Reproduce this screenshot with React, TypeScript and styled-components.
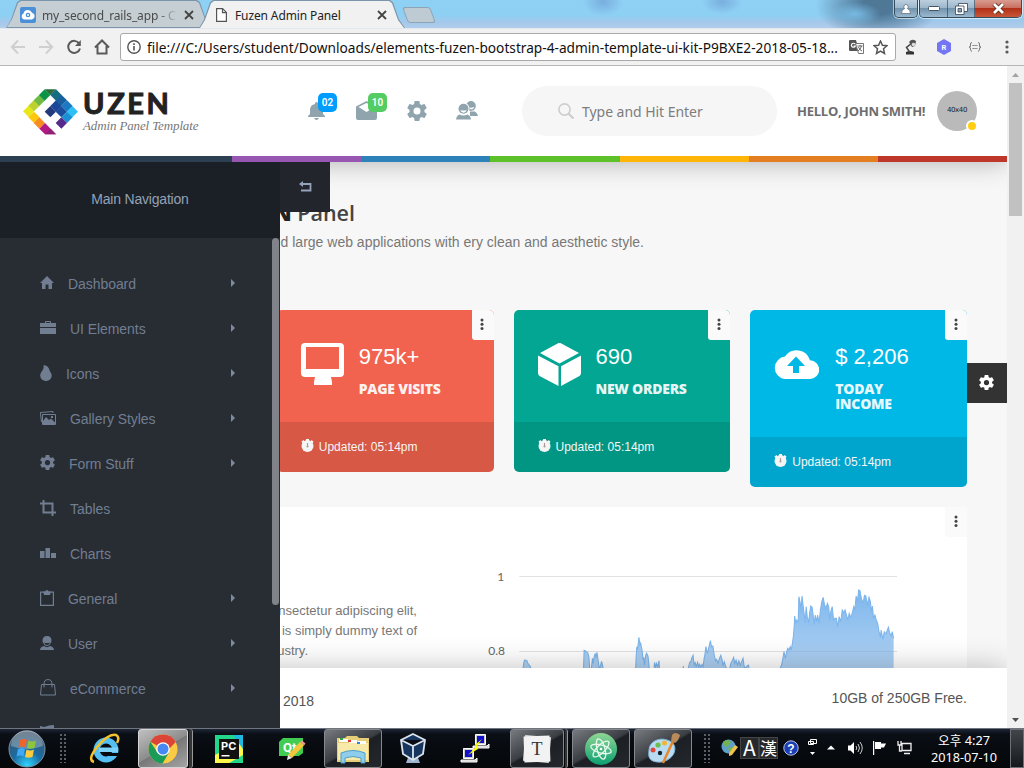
import React from "react";
import styled, { createGlobalStyle } from "styled-components";

const Global = createGlobalStyle`
  *, *::before, *::after { box-sizing: border-box; }
  html, body { margin: 0; padding: 0; overflow: hidden; }
  body { font-family: "Liberation Sans", Arial, sans-serif; font-size: 14px; color: #777; }
  svg { display: block; flex: none; }
`;

const ui = `"Noto Sans", "Noto Sans CJK KR", sans-serif`;

const Desktop = styled.div`
  width: 1024px; height: 768px; display: flex; flex-direction: column; overflow: hidden;
`;

/* ---------- browser window ---------- */
const TitleBar = styled.div`
  height: 28px; flex: none; display: flex; align-items: flex-start; justify-content: space-between;
  background:
    radial-gradient(ellipse 26px 12px at 855px 14px, #77b9e2 0, transparent 100%),
    radial-gradient(ellipse 62px 34px at 878px 6px, #4f7796 0 25%, transparent 100%),
    radial-gradient(ellipse 20px 14px at 603px 2px, #78aedd, transparent),
    radial-gradient(ellipse 20px 12px at 722px 2px, #78aedd, transparent),
    linear-gradient(#8fd0f5 0, #8ecff4 55%, #a5c8ea 80%, #b2cdec 100%);
`;
const Tabs = styled.div`display: flex; padding-left: 6px; height: 28px;`;
const Tab = styled.div<{ $active?: boolean }>`
  position: relative; width: 206px; height: 28px; margin-right: -13px;
  display: flex; align-items: center; padding: 2px 17px 0 ${p => (p.$active ? 17 : 14)}px;
  z-index: ${p => (p.$active ? 2 : 1)};
  font: 12px ${ui}; color: ${p => (p.$active ? "#222" : "#4b4b4b")};
  &::before, &::after {
    content: ""; position: absolute; inset: 0; z-index: -2; background: #7d95aa;
    clip-path: polygon(0 100%, 5px 70%, 11px 8%, 14px 0, 191px 0, 194px 8%, 200px 70%, 206px 100%);
  }
  &::after { inset: 1px 1px ${p => (p.$active ? 0 : 1)}px; z-index: -1; background: ${p => (p.$active ? "#f1f1f1" : "#c5ced3")};
    clip-path: polygon(0 100%, 5px 70%, 11px 8%, 14px 0, 189px 0, 192px 8%, 198px 70%, 204px 100%); }
`;
const TabTitle = styled.span<{ $gap: number; $fade?: boolean }>`
  width: 136px; margin: 0 6px 0 ${p => p.$gap}px; white-space: nowrap; overflow: hidden; letter-spacing: -.12px;
  mask-image: ${p => (p.$fade ? "linear-gradient(90deg,#000 85%,transparent)" : "none")};
`;
const NewTab = styled.div`
  width: 28px; height: 16px; margin: 7px 0 0 13px; border: 1px solid #8da4b5; border-radius: 3px;
  background: #bfcbd2; transform: skewX(20deg);
`;
const WinButtons = styled.div`display: flex; gap: 1px; margin-right: 2px;`;
const WinGroup = styled.div`
  display: flex; height: 18px; border: 1px solid #354b5e; border-top: 0; border-radius: 0 0 5px 5px; overflow: hidden;
  box-shadow: 0 0 0 1px rgba(255,255,255,.55);
`;
const WinBtn = styled.div<{ $w: number; $close?: boolean }>`
  width: ${p => p.$w}px; display: flex; align-items: center; justify-content: center;
  border-right: ${p => (p.$close ? 0 : "1px solid rgba(40,60,80,.6)")};
  &:last-child { border-right: 0; }
  background: ${p => (p.$close ? "linear-gradient(#d99c90 0,#c9705f 45%,#b23018 50%,#c8573a 100%)" : "linear-gradient(#bcd0df 0,#9db7cb 45%,#7394ae 50%,#9bb9cf 100%)")};
`;
const Toolbar = styled.div`
  height: 38px; flex: none; background: #f1f1f1; border-top: 1px solid #e3e8ee; border-bottom: 1px solid #b6b6b6;
  display: flex; align-items: center; padding: 0 9px 0 10px;
`;
const NavButtons = styled.div`display: flex; gap: 12px; width: 110px;`;
const UrlBox = styled.div`
  width: 776px; height: 28px; background: #fff; border: 1px solid #a9a9a9; border-radius: 3px;
  display: flex; align-items: center; padding-left: 6px;
`;
const Url = styled.span`
  flex: none; width: 708px; padding-left: 6px; font: 13.68px ${ui}; color: #111; white-space: nowrap; overflow: hidden;
`;
const Extensions = styled.div`flex: 1; display: flex; align-items: center; justify-content: space-between; padding-left: 8px;`;

/* ---------- page ---------- */
const Viewport = styled.div`height: 662px; display: flex; flex: none;`;
const Page = styled.div`
  position: relative; width: 1007px; background: #f7f7f7; overflow: hidden; display: flex; flex-direction: column;
`;
const ScrollTrack = styled.div`
  width: 17px; background: #f1f1f1; display: flex; flex-direction: column; align-items: center; padding: 7px 0 6px;
`;
const ScrollThumb = styled.div`width: 13px; height: 133px; margin-top: 6px; margin-bottom: auto; background: #c1c1c1;`;

const Header = styled.header`
  position: relative; z-index: 3; flex: none; background: #fff; box-shadow: 0 0 25px rgba(0,0,0,.3);
`;
const HeaderRow = styled.div`height: 90px; display: flex; align-items: center; padding-left: 23px;`;
const Brand = styled.div`display: flex; align-items: center; width: 284px; gap: 4px; padding-top: 1px;`;
const BrandText = styled.div`display: flex; flex-direction: column; padding-bottom: 1px;`;
const BrandName = styled.div`font: 700 29px/30px Lato, sans-serif; -webkit-text-stroke: 1px #222; color: #222; letter-spacing: 2.6px;`;
const BrandTag = styled.div`font: italic 13px/16px "Liberation Serif", serif; color: #777; white-space: nowrap; letter-spacing: -.13px;`;
const HeaderIcons = styled.div`display: flex; width: 215px; gap: 28px; color: #90a4ae; align-items: center;`;
const IconSlot = styled.div<{ $w: number }>`position: relative; width: ${p => p.$w}px; padding-bottom: 1px;`;
const Badge = styled.span<{ $c: string; $x?: number }>`
  position: absolute; left: ${p => p.$x || 11}px; top: -8px; width: 19px; height: 19px; border-radius: 5px; background: ${p => p.$c};
  color: #fff; font: 600 10px/19px Roboto, sans-serif; text-align: center;
`;
const Search = styled.div`
  width: 255px; height: 50px; border-radius: 25px; background: #f6f6f6; display: flex; align-items: center;
  padding-left: 36px; gap: 8px; font: 14px ${ui}; color: #7d7d7d; white-space: nowrap; letter-spacing: -.04px;
`;
const Hello = styled.div`
  margin-left: 20px; width: 140px; font: 700 13px "Open Sans", sans-serif; color: #6d6d6d; white-space: nowrap; letter-spacing: -.25px;
`;
const Avatar = styled.div`
  position: relative; width: 40px; height: 40px; border-radius: 50%; background: #bababa; color: #222;
  font: 7px/39px "DejaVu Sans", sans-serif; text-align: center; letter-spacing: -.4px;
  &::after { content: ""; position: absolute; right: -1px; bottom: -1px; width: 12px; height: 12px; border-radius: 50%;
    border: 2px solid #fff; background: #ffcd12; }
`;
const Stripe = styled.div`display: grid; grid-template-columns: 232px repeat(6, 1fr); height: 6px;`;
const StripePart = styled.i<{ $c: string }>`background: ${p => p.$c};`;

const Sidebar = styled.aside`
  position: absolute; z-index: 4; left: 0; top: 96px; width: 280px; height: 566px; background: #282c33;
  display: flex; flex-direction: column;
`;
const SideHead = styled.div`
  height: 76px; flex: none; background: #1b1f26; color: #94a2b5; text-align: center; line-height: 75px; font-size: 14px; letter-spacing: -.2px;
`;
const SideBody = styled.div`flex: 1; display: flex; overflow: hidden;`;
const SideList = styled.div`width: 272px; padding-top: 24px;`;
const SideBar = styled.div`width: 7px; height: 367px; border-radius: 4px; background: #80848a;`;
const NavItem = styled.div`
  height: 45px; display: flex; align-items: center; padding: 0 0 2px 40px; color: #717e92; font-size: 14px; letter-spacing: -.06px;
`;
const NavIcon = styled.span<{ $w: number }>`width: ${p => p.$w}px; margin-right: 14px; padding-bottom: 2px;`;
const NavLabel = styled.span`flex: 1;`;
const Caret = styled.i`
  border: 4px solid transparent; border-left-color: #7e8b9f; border-right: 0; margin: 0 37px 2px 0;
`;
const Collapse = styled.div`
  position: absolute; z-index: 4; left: 280px; top: 96px; width: 50px; height: 50px; background: #22252c;
  display: flex; align-items: center; justify-content: center; color: #94a3ba; padding-bottom: 2px;
`;
const Customizer = styled.div`
  position: absolute; z-index: 4; right: 0; top: 297px; width: 40px; height: 40px; background: #333; color: #fff;
  display: flex; align-items: center; justify-content: center; padding: 0 2px 2px 0;
`;

const Main = styled.main`flex: 1; padding: 36px 40px 0;`;
const Heading = styled.h1`
  margin: 0; width: 315px; font: 600 21.500px/30px "Open Sans", sans-serif; color: #444; text-align: right; white-space: nowrap;
  b { font-weight: 800; color: #222; }
`;
const Sub = styled.p`margin: 5px 0 0; width: 604px; text-align: right; line-height: 18px; white-space: nowrap;`;
const Cards = styled.div`
  margin-top: 59px; display: grid; grid-template-columns: repeat(4, 1fr); gap: 20px; align-items: start;
`;
const Card = styled.section<{ $c: string; $col: number }>`
  position: relative; grid-column: ${p => p.$col}; grid-row: 1; background: ${p => p.$c}; border-radius: 5px; overflow: hidden; color: #fff;
`;
const CardBody = styled.div`display: flex; gap: 14px; padding: 34px 36px 26px 24px;`;
const CardIcon = styled.span<{ $wide?: boolean }>`margin: ${p => (p.$wide ? "5px 2px 0 -1px" : "-1px 0 0")};`;
const Value = styled.div`font-size: 22px; line-height: 26px;`;
const Label = styled.div`
  margin-top: 11px; font: 800 14px/15px "Open Sans", sans-serif; color: rgba(255,255,255,.92); letter-spacing: -.25px;
`;
const CardFoot = styled.div`
  height: 50px; background: rgba(0,0,0,.1); padding-left: 24px; display: flex; align-items: center; gap: 5px;
  font-size: 12px; color: #f5f5f5;
  svg { margin-bottom: 4px; }
`;
const Menu = styled.span`
  position: absolute; right: 0; top: 0; width: 22px; height: 30px; background: #fafafa; border-radius: 0 4px 0 3px; color: #444;
  display: flex; align-items: center; justify-content: center; padding: 0 1px 1px 0;
`;
const Panel = styled.section`
  position: relative; margin-top: 20px; height: 300px; background: #fff; border-radius: 4px; display: flex;
`;
const Copy = styled.div`width: 440px; padding-top: 94px; font-size: 13px; line-height: 20px;`;
const CopyLine = styled.div<{ $end: number }>`width: ${p => p.$end}px; text-align: right; white-space: nowrap;`;
const Footer = styled.footer`
  position: absolute; z-index: 3; bottom: 0; left: 0; right: 0; height: 60px; background: #fff; box-shadow: 0 0 30px rgba(0,0,0,.25);
  display: flex; justify-content: space-between; padding: 0 40px 0 283px; color: #555; line-height: 60px;
`;
const Year = styled.span`padding-top: 3px;`;

/* ---------- taskbar ---------- */
const Taskbar = styled.div`
  height: 40px; flex: none; display: flex; align-items: stretch; border-top: 1px solid #70757d;
  background: linear-gradient(#1d2738 0, #0b0f16 5px, #070b10 50%, #050709 100%);
`;
const Slot = styled.div<{ $w: number }>`width: ${p => p.$w}px; display: flex; align-items: center; justify-content: center;`;
const TaskBtn = styled(Slot)<{ $hot?: boolean; $shift?: boolean }>`
  margin: 0 4px 0 ${p => (p.$shift ? 3 : 0)}px; border: 1px solid ${p => (p.$hot ? "#d5d5d5" : "#85888c")}; border-radius: 3px;
  background: ${p => (p.$hot ? "linear-gradient(150deg,#c0c0c0,#8c8c8c 50%,#777 51%,#a4a4a4)" : "linear-gradient(150deg,#777a7e,#3a3e43 48%,#1c2024 52%,#24282c)")};
`;
const Stack = styled.i`width: 3px; margin: 0 1px 0 -3px; border-right: 1px solid #999; border-radius: 0 3px 3px 0; background: #333;`;
const Grip = styled.div`
  width: 8px; height: 30px; margin: 4px 5px 0;
  background: radial-gradient(circle, #5b6068 0 .8px, transparent 1px) 0 0 / 4px 4px;
`;
const Tray = styled.div`display: flex; align-items: center; color: #fff; width: 202px; padding-left: 5px; padding-bottom: 2px;`;
const TrayItem = styled.span<{ $gap: number }>`margin-left: ${p => p.$gap}px;`;
const Ime = styled.span<{ $size: number }>`
  width: 19px; height: 22px; border: 1px solid #444; background: #25282c; font: ${p => p.$size}px/19px "Noto Sans CJK KR", sans-serif; color: #fff;
  display: flex; justify-content: center;
`;
const Clock = styled.div`
  width: 92px; display: flex; flex-direction: column; align-items: center; justify-content: center; color: #fff; font: 12.700px/17px ${ui};
  padding-top: 1px;
`;
const ShowDesktop = styled.div`width: 14px; margin-left: auto; border: 1px solid #6d7176; background: linear-gradient(#42464b,#15181c);`;

/* ---------- icons ---------- */
const Gear = ({ s }: { s: number }) => (
  <svg width={s} height={s} viewBox="2 2 20 20">
    <path fill="currentColor" fillRule="evenodd" d="M19.430 12.980c.04-.32.07-.64.07-.98s-.03-.66-.07-.98l2.110-1.650c.19-.15.24-.42.12-.64l-2-3.460c-.12-.22-.39-.3-.61-.22l-2.490 1c-.52-.4-1.080-.73-1.690-.98l-.38-2.650C14.460 2.180 14.250 2 14 2h-4c-.25 0-.46.18-.49.42l-.38 2.650c-.61.25-1.170.59-1.690.98l-2.490-1c-.23-.09-.49 0-.61.22l-2 3.460c-.13.22-.07.49.12.64l2.110 1.650c-.04.32-.07.65-.07.98s.03.66.07.98l-2.110 1.650c-.19.15-.24.42-.12.64l2 3.460c.12.22.39.3.61.22l2.490-1c.52.4 1.080.73 1.690.98l.38 2.650c.03.24.24.42.49.42h4c.25 0 .46-.18.49-.42l.38-2.650c.61-.25 1.170-.59 1.690-.98l2.490 1c.23.09.49 0 .61-.22l2-3.460c.12-.22.07-.49-.12-.64zM12 8.500a3.500 3.500 0 1 0 0 7 3.500 3.500 0 0 0 0-7z" />
  </svg>
);
const Dots = () => (
  <svg width="4" height="13" viewBox="0 0 4 13" fill="currentColor">
    <circle cx="2" cy="2" r="1.500" /><circle cx="2" cy="6.300" r="1.500" /><circle cx="2" cy="10.600" r="1.500" />
  </svg>
);
const Watch = () => (
  <svg width="13" height="13" viewBox="0 0 13 13">
    <circle cx="6.500" cy="7" r="6" fill="#f5f5f5" /><path fill="#f5f5f5" d="M5 0h3v2H5zM.5 2.500l2-1.500 1 1.500-2 2zM12.500 2.500l-2-1.500-1 1.500 2 2z" />
    <path stroke="#a99" strokeWidth="1.100" d="M6.500 4v4" /><circle cx="6.500" cy="7.500" r="1" fill="#a99" />
  </svg>
);
const cell = (cx: number, cy: number) => `M${cx - 17} ${cy}l17 -17 17 17 -17 17z`;
const tiles: [number, number, string][] = [
  [86, 136, "#e9e817"], [102, 119, "#bdd22f"], [118, 103, "#70bb44"], [134, 87, "#0d9347"],
  [168, 87, "#156d84"], [184, 103, "#175f9d"], [201, 120, "#1b78c2"], [217, 137, "#2cc0f4"],
  [102, 154, "#fdc70e"], [118, 171, "#f78d22"], [168, 120, "#1b4899"], [151, 137, "#253a7c"],
  [184, 137, "#1a4d9e"], [201, 154, "#1a8fd3"], [184, 171, "#562b8c"],
];
const Logo = () => (
  <svg width="56" height="46" viewBox="69 69 168 138">
    <path fill="#2d6b3c" d="M134 70h34l-17 18z" />
    {tiles.map(([x, y, c]) => <path key={x + "-" + y} d={cell(x, y)} fill={c} />)}
    <path fill="#b41a83" d="M118 188l17-17 33 34h-33z" /><path fill="#8d2377" d="M135 205l17-17 16 17z" />
  </svg>
);

const navIcons: Record<string, React.ReactNode> = {
  home: <svg width="14" height="13" viewBox="0 0 14 13"><path fill="currentColor" d="M7 0l7 7h-2v6H8.500V8.500h-3V13H2V7H0z" /></svg>,
  case: <svg width="16" height="13" viewBox="0 0 16 13"><path fill="currentColor" d="M5 2V.8Q5 0 6 0h4q1 0 1 .8V2h4.500q.5 0 .5.500V6H0V2.500Q0 2 .5 2zm1.200 0h3.600V1H6.200zM0 7h16v5.500q0 .5-.5.500H.5q-.5 0-.5-.500z" /></svg>,
  drop: <svg width="12" height="16" viewBox="0 0 12 16"><path fill="currentColor" d="M3.500 0C9 1 9 4 10 6.500c1 1.500 1.700 2.500 1.700 4.200A5.500 5.500 0 0 1 6 16 5.600 5.600 0 0 1 .2 10.500C.2 7 4.500 5 3.500 0z" /></svg>,
  images: <svg width="16" height="14" viewBox="0 0 16 14" fill="none" stroke="currentColor"><path d="M2.500 3.500h13v10h-13zM1.500 11L.5 3V1.500L13 .5v1.500" /><path fill="currentColor" stroke="none" d="M3 13v-3l3-4 3 3 2-1.500 4 4V13zM11 5h2v2h-2z" /></svg>,
  gear: <Gear s={15} />,
  crop: <svg width="16" height="16" viewBox="0 0 16 16" fill="none" stroke="currentColor" strokeWidth="2"><path d="M3.500 0v12.500H16M0 3.500h12.500V16" /></svg>,
  bars: <svg width="16" height="10" viewBox="0 0 16 10"><path fill="currentColor" d="M0 3h4.500v7H0zM5.500 0H10v10H5.500zM11 5h5v5h-5z" /></svg>,
  clip: <svg width="14" height="16" viewBox="0 0 14 16"><path fill="none" stroke="currentColor" strokeWidth="1.200" d="M.6 2.100h12.800v13.300H.6z" /><path fill="currentColor" d="M3 1.500h2.500a1.500 1.500 0 0 1 3 0H11L10 5H4z" /></svg>,
  user: <svg width="14" height="14" viewBox="0 0 14 14"><path fill="currentColor" d="M7 0c3 0 4.500 2 4.500 4.500S9 10 7 10 2.500 7 2.500 4.500 4 0 7 0zM0 14c0-2.500 2-3.500 4-4 2 1.500 4 1.500 6 0 2 .5 4 1.500 4 4z" /><path d="M4 6.500q3 1.200 6 0-1 2.500-3 2.500t-3-2.500z" fill="#282c33" /></svg>,
  bag: <svg width="16" height="17" viewBox="0 0 16 17" fill="none" stroke="currentColor"><path d="M1.500 5.500h13l1 10.500H.5zM4 8.500V5Q4 .6 8 .6T12 5v3.500" /></svg>,
  map: <svg width="14" height="16" viewBox="0 0 14 16"><path fill="currentColor" d="M0 1l4 1 2-.5L9 .5 14 0v16H0z" /></svg>,
};
const nav: [string, string, number, boolean][] = [
  ["Dashboard", "home", 14, true], ["UI Elements", "case", 16, true], ["Icons", "drop", 12, true],
  ["Gallery Styles", "images", 16, true], ["Form Stuff", "gear", 15, true], ["Tables", "crop", 16, false],
  ["Charts", "bars", 16, false], ["General", "clip", 14, true], ["User", "user", 14, true], ["eCommerce", "bag", 16, true], ["", "map", 14, false],
];

const CloseX = () => (
  <svg width="10" height="10" viewBox="0 0 10 10"><path stroke="#444" strokeWidth="1.800" d="M1 1l8 8M9 1l-8 8" /></svg>
);

const series =
  "115,380 122,370 126,340 128,330 135,331 137,338 140,343 144,348 147,356 150,375 298,375 300,301 304,303 308,306 311,310 314,322 316,356 319,375 321,356 324,325 326,340 329,320 332,310 334,325 337,307 341,335 344,356 348,345 350,334 352,340 355,356 358,380 445,380 449,350 450,320 452,290 454,298 458,262 461,285 463,280 467,300 470,330 472,322 474,345 477,318 480,310 484,318 487,345 489,375 500,375 503,337 506,350 509,340 512,352 516,332 518,375 583,375 586,349 589,375 600,356 604,338 608,333 611,322 614,316 617,345 620,338 623,350 627,337 630,350 633,343 636,351 640,343 643,350 646,325 648,315 651,290 655,310 658,298 661,285 664,272 667,290 671,288 675,315 679,333 682,328 686,340 690,325 694,316 698,330 700,347 704,335 708,350 712,356 719,358 723,340 727,332 731,322 734,340 738,330 742,345 746,332 750,346 754,335 758,325 761,348 765,355 769,348 774,345 777,375 862,375 866,352 869,345 873,325 876,305 880,325 884,305 887,295 891,300 894,290 897,300 900,282 903,260 905,235 907,198 910,220 913,210 917,215 919,140 923,160 925,185 928,138 931,165 934,190 937,218 940,170 943,200 947,218 950,190 953,168 957,172 960,195 963,224 966,195 970,215 973,195 977,220 981,180 985,155 989,142 993,165 997,175 1001,160 1005,170 1008,212 1011,185 1015,170 1019,210 1023,205 1027,205 1031,230 1035,200 1040,215 1044,180 1048,188 1052,180 1056,195 1060,210 1064,190 1068,202 1072,192 1077,170 1080,180 1084,138 1088,155 1091,120 1095,122 1099,145 1104,160 1108,136 1112,138 1116,165 1121,142 1125,155 1128,185 1131,168 1134,205 1138,195 1142,210 1146,220 1150,245 1154,262 1156,240 1161,268 1165,245 1170,252 1174,240 1177,232 1181,250 1185,258 1188,245 1192,265";

const Chart = () => (
  <svg width="487" height="161" viewBox="0 -129 1461 483">
    <defs>
      <linearGradient id="area" gradientUnits="userSpaceOnUse" x1="0" y1="110" x2="0" y2="720">
        <stop offset="0" stopColor="#7cb5ec" /><stop offset="1" stopColor="#7cb5ec" stopOpacity="0" />
      </linearGradient>
    </defs>
    <path d="M118 79.500H1251M118 304.500H1251" stroke="#e2e2e2" strokeWidth="3" />
    <g transform="scale(1.041 1)">
      <polygon points={series + " 1192,400 115,400"} fill="url(#area)" />
      <polyline points={series} fill="none" stroke="#7cb5ec" strokeWidth="3" />
    </g>
    <g fontFamily="Lato, sans-serif" fontSize="36" fill="#666" textAnchor="end"><text x="73" y="93">1</text><text x="75" y="316">0.8</text></g>
  </svg>
);

const StatCard = ({ col, color, icon, wide, value, label }: { col: number; color: string; icon: React.ReactNode; wide?: boolean; value: string; label: string }) => (
  <Card $col={col} $c={color}>
    <CardBody><CardIcon $wide={wide}>{icon}</CardIcon><div><Value>{value}</Value><Label>{label}</Label></div></CardBody>
    <CardFoot><Watch /><span>Updated: 05:14pm</span></CardFoot>
    <Menu><Dots /></Menu>
  </Card>
);

const Monitor = () => (
  <svg width="44" height="42" viewBox="0 0 44 42"><path fill="#fff" fillRule="evenodd" d="M4 0h35q4 0 4 4v26q0 4-4 4h-9l1 5v3H13v-3l1-5H4q-4 0-4-4V4q0-4 4-4zm1 4v22h33V4z" /></svg>
);
const Cube = () => (
  <svg width="44" height="43" viewBox="0 0 44 43"><path fill="#fff" d="M21.500-.5L41 10 21.500 20.500 2 10zM0 12.500l20.500 10.800V43L1.500 33Q0 32 0 30zM43 12.500L23 23.300V43l18.500-10q1.500-1 1.500-3z" /></svg>
);
const Cloud = () => (
  <svg width="46" height="30" viewBox="0 0 46 30"><path fill="#fff" fillRule="evenodd" d="M37 11.300A14 14 0 0 0 12 7.600 11.300 11.300 0 0 0 11.300 30H36.700a9.300 9.300 0 0 0 .3-18.700zM26 17v7h-6v-7h-6l9-9.500 9 9.500z" /></svg>
);

export default function App() {
  return (
    <Desktop>
      <Global />
      <TitleBar>
        <Tabs>
          <Tab>
            <svg width="16" height="16" viewBox="0 0 16 16"><rect width="16" height="16" rx="2" fill="#4a90d9" /><path fill="#fff" d="M4 12.500A3.200 3.200 0 0 1 3.500 6.500a4.500 4.500 0 0 1 8.500-.8A3.500 3.500 0 0 1 12 12.500z" /><circle cx="8" cy="8" r="2.300" fill="#4a90d9" /><circle cx="8" cy="8" r="1" fill="#fff" /></svg>
            <TabTitle $gap={6} $fade>my_second_rails_app - C</TabTitle>
            <CloseX />
          </Tab>
          <Tab $active>
            <svg width="11" height="14" viewBox="0 0 11 14"><path fill="#fff" stroke="#555" strokeWidth="1.200" d="M.6.6h6l3.800 3.800v9H.6zM6.500.6v4h4" /></svg>
            <TabTitle $gap={8}>Fuzen Admin Panel</TabTitle>
            <CloseX />
          </Tab>
          <NewTab />
        </Tabs>
        <WinButtons>
          <WinGroup><WinBtn $w={22}><svg width="10" height="10" viewBox="0 0 10 10"><path fill="#fff" stroke="#456" strokeWidth=".6" d="M5 .5a2.300 2.300 0 0 1 1.300 4.100Q9.500 5.500 9.500 9.500h-9Q.5 5.500 3.700 4.600A2.300 2.300 0 0 1 5 .5z" /></svg></WinBtn></WinGroup>
          <WinGroup>
            <WinBtn $w={28}><svg width="12" height="5" viewBox="0 0 12 5"><rect x=".5" y=".5" width="11" height="4" rx="1" fill="#fff" stroke="#456" /></svg></WinBtn>
            <WinBtn $w={27}><svg width="13" height="12" viewBox="0 0 13 12"><path fill="#fff" stroke="#345" strokeWidth=".8" d="M3.500.5h9v8h-9z" /><path fill="#fff" stroke="#345" strokeWidth=".8" d="M.5 3h8.500v8.500H.5z" /><path fill="#89a5ba" stroke="#345" strokeWidth=".8" d="M3 5.500h3.500V9H3z" /></svg></WinBtn>
            <WinBtn $w={46} $close><svg width="13" height="11" viewBox="0 0 13 11"><path stroke="#532" strokeWidth="4.500" d="M2 1l9 9M11 1l-9 9" /><path stroke="#fff" strokeWidth="2.800" d="M2 1l9 9M11 1l-9 9" /></svg></WinBtn>
          </WinGroup>
        </WinButtons>
      </TitleBar>
      <Toolbar>
        <NavButtons>
          <svg width="16" height="16" viewBox="0 0 16 16" fill="none" stroke="#cfcfcf" strokeWidth="1.900"><path d="M15 8H2.500M8 1.500L1.800 8 8 14.500" /></svg>
          <svg width="16" height="16" viewBox="0 0 16 16" fill="none" stroke="#cfcfcf" strokeWidth="1.900"><path d="M1 8h12.500M8 1.500L14.200 8 8 14.500" /></svg>
          <svg width="16" height="16" viewBox="0 0 16 16" fill="none" stroke="#5a5a5a" strokeWidth="2"><path d="M13.200 4.500A6 6 0 1 0 14 9.500" /><path d="M14.800 1v6H9z" fill="#5a5a5a" stroke="none" /></svg>
          <svg width="16" height="16" viewBox="0 0 16 16" fill="none" stroke="#5a5a5a" strokeWidth="2"><path d="M1 8.500L8 1.500l7 7M3.500 7v7.500h9V7" /></svg>
        </NavButtons>
        <UrlBox>
          <svg width="14" height="14" viewBox="0 0 14 14"><circle cx="7" cy="7" r="6.200" fill="none" stroke="#555" strokeWidth="1.400" /><path fill="#555" d="M6.200 6h1.600v4.500H6.200zM6.200 3.300h1.600v1.600H6.200z" /></svg>
          <Url>file:///C:/Users/student/Downloads/elements-fuzen-bootstrap-4-admin-template-ui-kit-P9BXE2-2018-05-18...</Url>
          <svg width="15" height="15" viewBox="0 0 15 15"><path fill="#555" d="M1 0h6l3 11H1q-1 0-1-1V1q0-1 1-1z" /><path fill="#fff" stroke="#777" d="M6.500 3.500h8v10h-5z" /><path fill="none" stroke="#fff" strokeWidth="1.200" d="M6 4a2 2 0 1 0 .3 2H4.500" /><path d="M8.500 6h5M11 5v1M9 11q3-2 3.500-5M9.500 7q1 3 3.500 4" fill="none" stroke="#666" /></svg>
          <TrayItem $gap={9}><svg width="15" height="15" viewBox="0 0 15 15"><path fill="none" stroke="#555" strokeWidth="1.500" d="M7.500 1l1.900 4.300 4.600.4-3.500 3.100 1 4.600-4-2.400-4 2.400 1-4.600L1 5.700l4.600-.4z" /></svg></TrayItem>
        </UrlBox>
        <Extensions>
          <svg width="16" height="16" viewBox="0 0 16 16"><path fill="#333" d="M2 13q4-2 8 0v2.500H2z" /><path d="M6 13.500L2.500 8.500 8 4" fill="none" stroke="#444" strokeWidth="1.500" /><path fill="#555" d="M5 3q3-4 7-1l-1 5-3 1z" /><circle cx="9.500" cy="5.500" r="1.800" fill="#ddd" /></svg>
          <svg width="16" height="16" viewBox="0 0 16 16"><path fill="#7375f5" d="M8 0l7 4v8l-7 4-7-4V4z" /><text x="8" y="11" fontSize="7.500" fontWeight="700" fontFamily="Roboto, sans-serif" textAnchor="middle" fill="#fff">R</text></svg>
          <svg width="16" height="12" viewBox="0 0 16 12"><g fill="none" stroke="#777"><path d="M5 1.500Q3 1.500 3.500 4T2 6q1.500 0 1.500 2T5 10.500M11 1.500q2 0 1.500 2.500T14 6q-1.500 0-1.500 2T11 10.500" /><path d="M5.500 4.500h5M5.500 7.500h5" strokeDasharray="1.400 .5" /></g></svg>
          <svg width="16" height="16" viewBox="0 0 16 16" fill="#5a5a5a"><circle cx="8" cy="3" r="1.600" /><circle cx="8" cy="8" r="1.600" /><circle cx="8" cy="13" r="1.600" /></svg>
        </Extensions>
      </Toolbar>

      <Viewport>
        <Page>
          <Header>
            <HeaderRow>
              <Brand>
                <Logo />
                <BrandText><BrandName>UZEN</BrandName><BrandTag>Admin Panel Template</BrandTag></BrandText>
              </Brand>
              <HeaderIcons>
                <IconSlot $w={20}>
                  <svg width="20" height="19" viewBox="0 0 20 19"><path fill="currentColor" d="M1 16v-1l2-2V8.500A6 6 0 0 1 8 3V2q1.500-2 3 0v1a6 6 0 0 1 5 5.500V13l2 2v1zM7 17h5q-1 2-2.500 2T7 17z" /></svg>
                  <Badge $c="#009dff">02</Badge>
                </IconSlot>
                <IconSlot $w={24}>
                  <svg width="23" height="19" viewBox="0 0 23 19"><path fill="currentColor" fillRule="evenodd" d="M1 5.500L11.500 0 22 5.500V17q0 2-2 2H3q-2 0-2-2zM3.500 6l8 5 8-5-8-4z" /></svg>
                  <Badge $c="#53cc63" $x={13}>10</Badge>
                </IconSlot>
                <IconSlot $w={21}><Gear s={20} /></IconSlot>
                <IconSlot $w={22}>
                  <svg width="22" height="19" viewBox="0 0 22 19">
                    <path fill="currentColor" d="M10 0h0M15 0a4.800 4.800 0 0 1 4.800 4.800C19.800 8 17.500 10 15 10s-4.800-2-4.800-5.200A4.800 4.800 0 0 1 15 0zM14 10.500h5q2.500 1.500 3 4.500h-8z" />
                    <path fill="#fff" d="M13 6.500q3 .8 5.500-.8-1 2.800-3.500 2.800z" />
                    <circle cx="7.500" cy="7.800" r="6" fill="#fff" /><circle cx="7.500" cy="7.800" r="5" fill="currentColor" />
                    <path fill="#fff" d="M4.300 9q3.200 1.200 6.400 0-1 2.700-3.200 2.700T4.300 9z" />
                    <path fill="currentColor" d="M0 18.500Q.5 14.500 3.500 13.500q4 2 8 0 3 1 3.500 5z" />
                  </svg>
                </IconSlot>
              </HeaderIcons>
              <Search>
                <svg width="16" height="16" viewBox="0 0 16 16" fill="none" stroke="#cdcdcd" strokeWidth="1.600"><circle cx="6.500" cy="6.500" r="5.600" /><path strokeWidth="2.200" d="M10.500 10.500l5 5" /></svg>
                <span>Type and Hit Enter</span>
              </Search>
              <Hello>HELLO, JOHN SMITH!</Hello>
              <Avatar>40x40</Avatar>
            </HeaderRow>
            <Stripe>
              {["#2d4052", "#9656b2", "#2c82b9", "#5dc12a", "#ffb508", "#e37e22", "#bf372a"].map(c => <StripePart key={c} $c={c} />)}
            </Stripe>
          </Header>

          <Sidebar>
            <SideHead>Main Navigation</SideHead>
            <SideBody>
              <SideList>
                {nav.map(([label, icon, w, sub]) => (
                  <NavItem key={icon}><NavIcon $w={w}>{navIcons[icon]}</NavIcon><NavLabel>{label}</NavLabel>{sub && <Caret />}</NavItem>
                ))}
              </SideList>
              <SideBar />
            </SideBody>
          </Sidebar>
          <Collapse>
            <svg width="13" height="11" viewBox="0 0 13 11" fill="none" stroke="currentColor" strokeWidth="1.800"><path d="M2 3h9.500v6.500H2" /><path fill="currentColor" stroke="none" d="M4 0v6L0 3z" /></svg>
          </Collapse>
          <Customizer><Gear s={15} /></Customizer>

          <Main>
            <Heading><b>FUZEN</b> Panel</Heading>
            <Sub>and large web applications with ery clean and aesthetic style.</Sub>
            <Cards>
              <StatCard col={2} color="#f1634e" icon={<Monitor />} value="975k+" label="PAGE VISITS" />
              <StatCard col={3} color="#02a692" icon={<Cube />} value="690" label="NEW ORDERS" />
              <StatCard col={4} color="#00b8e6" icon={<Cloud />} wide value="$ 2,206" label="TODAY INCOME" />
            </Cards>
            <Panel>
              <Copy>
                <CopyLine $end={377}>consectetur adipiscing elit,</CopyLine>
                <CopyLine $end={377}>is simply dummy text of</CopyLine>
                <CopyLine $end={268}>industry.</CopyLine>
              </Copy>
              <Chart />
              <Menu><Dots /></Menu>
            </Panel>
          </Main>
          <Footer><Year>2018</Year><span>10GB of 250GB Free.</span></Footer>
        </Page>
        <ScrollTrack>
          <svg width="7" height="4" viewBox="0 0 7 4"><path fill="#a3a3a3" d="M0 4l3.500-4L7 4z" /></svg>
          <ScrollThumb />
          <svg width="7" height="4" viewBox="0 0 7 4"><path fill="#505050" d="M0 0l3.500 4L7 0z" /></svg>
        </ScrollTrack>
      </Viewport>

      <Taskbar>
        <Slot $w={54}>
          <svg width="38" height="38" viewBox="0 0 38 38">
            <defs><radialGradient id="orb" cx=".5" cy=".95" r=".9"><stop offset="0" stopColor="#2fd6ff" /><stop offset=".45" stopColor="#1b6ca3" /><stop offset="1" stopColor="#3d5468" /></radialGradient></defs>
            <circle cx="19" cy="19" r="18" fill="url(#orb)" stroke="#7d92a3" /><path fill="#fff" opacity=".28" d="M3 16a16 16 0 0 1 32 0q-16 6-32 0z" />
            <path fill="#f0642c" d="M12 10q4-2 7 0l-1.500 7.500q-3.500-2-7 0z" /><path fill="#8cc63e" d="M20.500 10.500q4 2 7.500 0L26.500 18q-4 1.500-7.500 0z" /><path fill="#3fa9f5" d="M10 19q4-2 7 0l-1.500 7.500q-3.500-2-7 0z" /><path fill="#fccb3e" d="M18.500 19.500q4 2 7.500 0L24.500 27q-4 1.500-7.500 0z" />
          </svg>
        </Slot>
        <Grip />
        <Slot $w={66}>
          <svg width="32" height="32" viewBox="0 0 32 32"><circle cx="17" cy="17" r="9.500" fill="none" stroke="#54bff2" strokeWidth="6" /><path fill="#070b10" d="M20 20h12v3H20z" /><path fill="#7cd2f8" d="M10 14.500h19v4.500H10z" /><path d="M5 29Q-2 27 8 14 20 0 27 2q4 2 1 8" fill="none" stroke="#f5c22e" strokeWidth="2.500" /></svg>
        </Slot>
        <TaskBtn $w={50} $hot>
          <svg width="30" height="30" viewBox="-15 -15 30 30"><circle r="14.500" fill="#fbcb43" /><path fill="#dc4437" d="M0 0L-12.600-7.200A14.500 14.500 0 0 1 12.600-7.200z" /><path fill="#dc4437" d="M0-7h12.700L6 0z" /><path fill="#1a9b58" d="M-12.600-7.200A14.500 14.500 0 0 0-.5 14.500L6 3.500 0 0-6 3z" /><circle r="6.800" fill="#fff" /><circle r="5.500" fill="#4688f4" /></svg>
        </TaskBtn>
        <Stack /><Stack />
        <Slot $w={69}>
          <svg width="28" height="28" viewBox="0 0 28 28"><rect width="28" height="28" fill="#21d789" /><path fill="#fcf84a" d="M0 20L28 6v14L14 28H0z" /><path fill="#1eb9e0" d="M18 0h10v14z" /><rect x="4" y="4" width="20" height="20" fill="#111" /><text x="6" y="15" fontFamily="Inter, sans-serif" fontSize="11" fontWeight="700" fill="#fff">PC</text><path fill="#fff" d="M6.500 20h8v1.500h-8z" /></svg>
        </Slot>
        <Slot $w={58}>
          <svg width="27" height="23" viewBox="0 0 27 23"><path fill="#41cd52" d="M4 1h20v15l-4 3H0V5z" /><text x="4" y="15" fontFamily="Roboto, sans-serif" fontSize="13" fontWeight="700" fill="#fff">Qt</text><path fill="#f4c63d" d="M9 18L21 5l4 3.500L13 21z" /><path fill="#eee" d="M9 18l4 3-5 2z" /><path fill="#e98" d="M21 5l2-1.500 3.500 3L25 8.500z" /></svg>
        </Slot>
        <TaskBtn $w={58} $shift>
          <svg width="34" height="30" viewBox="0 0 34 30"><path fill="#e6cf78" d="M1 4h8l2-2h10l2 2h10v24H1z" /><path fill="#f7eaa9" d="M2 9h30v17H2z" /><path fill="#fff" d="M3 5h9v3H3zM13 6h8v3h-8zM22 7h8v3h-8z" /><path fill="#2da34a" d="M4 4h3v2H4z" /><path fill="#d33" d="M12 6h3v2h-3z" /><path fill="#38d" d="M21 8h3v2h-3z" /><path fill="#8fcdec" stroke="#4c9fc8" d="M5 29V19q12-5 24 0v10h-4v-5q-8-3-16 0v5z" /></svg>
        </TaskBtn>
        <Slot $w={54}>
          <svg width="28" height="32" viewBox="0 0 28 32"><path fill="#9fb4cf" d="M10 22h8l3 8H7z" /><path fill="#17365f" stroke="#dbe4ee" strokeWidth="1.800" d="M14 1l12 6-2 14-10 6-10-6L2 7zM2 7l12 6 12-6M14 13v14" /></svg>
        </Slot>
        <Slot $w={70}>
          <svg width="30" height="30" viewBox="0 0 30 30"><path fill="#ccc" stroke="#fff" d="M15.500.5h10v10h-10zM13 12h14l2-2v4H13z" /><path fill="#11c" d="M17 2h7v7h-7z" /><path fill="#ccc" stroke="#fff" d="M3.500 14.500h10v10h-10zM1 26h14l2-2v4H1z" /><path fill="#11c" d="M5 16h7v7H5z" /><path fill="#ff0" d="M22 5l-7 6 1 2-8 8 10-6-1-3z" /></svg>
        </Slot>
        <TaskBtn $w={54}>
          <svg width="30" height="30" viewBox="0 0 30 30"><rect x="2" y="2" width="26" height="26" fill="#ddd" transform="rotate(5 15 15)" /><rect x="2" y="2" width="26" height="26" fill="#f2f2f2" transform="rotate(-2 15 15)" /><text x="15" y="21" textAnchor="middle" fontFamily="Liberation Serif, serif" fontSize="18" fill="#333">T</text></svg>
        </TaskBtn>
        <Stack />
        <TaskBtn $w={58} $shift>
          <svg width="32" height="32" viewBox="-16 -16 32 32"><defs><linearGradient id="atom" x1="0" x2="0" y1="0" y2="1"><stop offset="0" stopColor="#8fd694" /><stop offset="1" stopColor="#0ba070" /></linearGradient></defs><circle r="16" fill="url(#atom)" /><g fill="none" stroke="#e8f8ee" strokeWidth="1.300"><ellipse rx="4" ry="10.500" transform="rotate(-15)" /><ellipse rx="4" ry="10.500" transform="rotate(45)" /><ellipse rx="4" ry="10.500" transform="rotate(105)" /></g><circle r="1.300" fill="#fff" /></svg>
        </TaskBtn>
        <TaskBtn $w={58}>
          <svg width="34" height="32" viewBox="0 0 34 32"><path fill="#b9dcf3" stroke="#7fb2d4" d="M3 17C3 9 13 4 21 7c8 2 9 8 7 13s-9 10-17 9S2 24 3 17z" /><circle cx="7" cy="17" r="2.500" fill="#e0483e" /><circle cx="12" cy="12" r="2.600" fill="#6cbf4b" /><circle cx="18.500" cy="10" r="2.500" fill="#f2b731" /><circle cx="14" cy="20" r="2.200" fill="#123" /><path stroke="#e8872b" strokeWidth="2.500" d="M27 8L17 30" /><path fill="#b98a5a" d="M25 8l1-6q3-4 8 0-1 5-5 8z" /></svg>
        </TaskBtn>
        <Slot $w={2} /><Grip />
        <Tray>
          <svg width="17" height="17" viewBox="0 0 17 17"><circle cx="7.500" cy="7.500" r="7" fill="#5d9fc9" /><path fill="#72b34c" d="M2 3q5-4 8 0l-3 4-3 1zM7 9l5-1 2 3-5 4z" /><path fill="#f1c24d" d="M8 14l6-8 3 2-6 8-3 1z" /></svg>
          <TrayItem $gap={2}><Ime $size={21}>A</Ime></TrayItem><Ime $size={17}>漢</Ime>
          <TrayItem $gap={5}><svg width="16" height="16" viewBox="0 0 16 16"><circle cx="8" cy="8" r="7.200" fill="#1c3eb5" stroke="#b9c4de" /><text x="8" y="12.500" textAnchor="middle" fontSize="12" fontWeight="700" fill="#fff">?</text></svg></TrayItem>
          <TrayItem $gap={9}><svg width="9" height="17" viewBox="0 0 9 17"><path d="M2.500.5h6v4h-6zM.5 2.500h5v3h-5z" fill="#111" stroke="#fff" /><path fill="#fff" d="M2 13h5l-2.500 3z" /></svg></TrayItem>
          <TrayItem $gap={10}><svg width="8" height="5" viewBox="0 0 8 5"><path fill="#fff" d="M0 4.500L4 .5l4 4z" /></svg></TrayItem>
          <TrayItem $gap={13}><svg width="15" height="14" viewBox="0 0 15 14"><path fill="#fff" d="M0 4.500h2.500L6 1v12L2.500 9.500H0z" /><path fill="none" stroke="#ccc" d="M8 5q1.500 2 0 4M10 3q3 4 0 8M12 1q4.500 6 0 12" /></svg></TrayItem>
          <TrayItem $gap={10}><svg width="15" height="14" viewBox="0 0 15 14"><path fill="#fff" d="M0 0h1.200v14H0zM2 1h6v1.500h5l-2 4H8V8H2z" /></svg></TrayItem>
          <TrayItem $gap={9}><svg width="16" height="15" viewBox="0 0 16 15"><path fill="none" stroke="#eee" strokeWidth="1.300" d="M5 3.500h9v7H5zM7 13.500h6M1 1v4h3V1M2.500 5v6H5" /></svg></TrayItem>
        </Tray>
        <Clock><span>오후 4:27</span><span>2018-07-10</span></Clock>
        <ShowDesktop />
      </Taskbar>
    </Desktop>
  );
}
